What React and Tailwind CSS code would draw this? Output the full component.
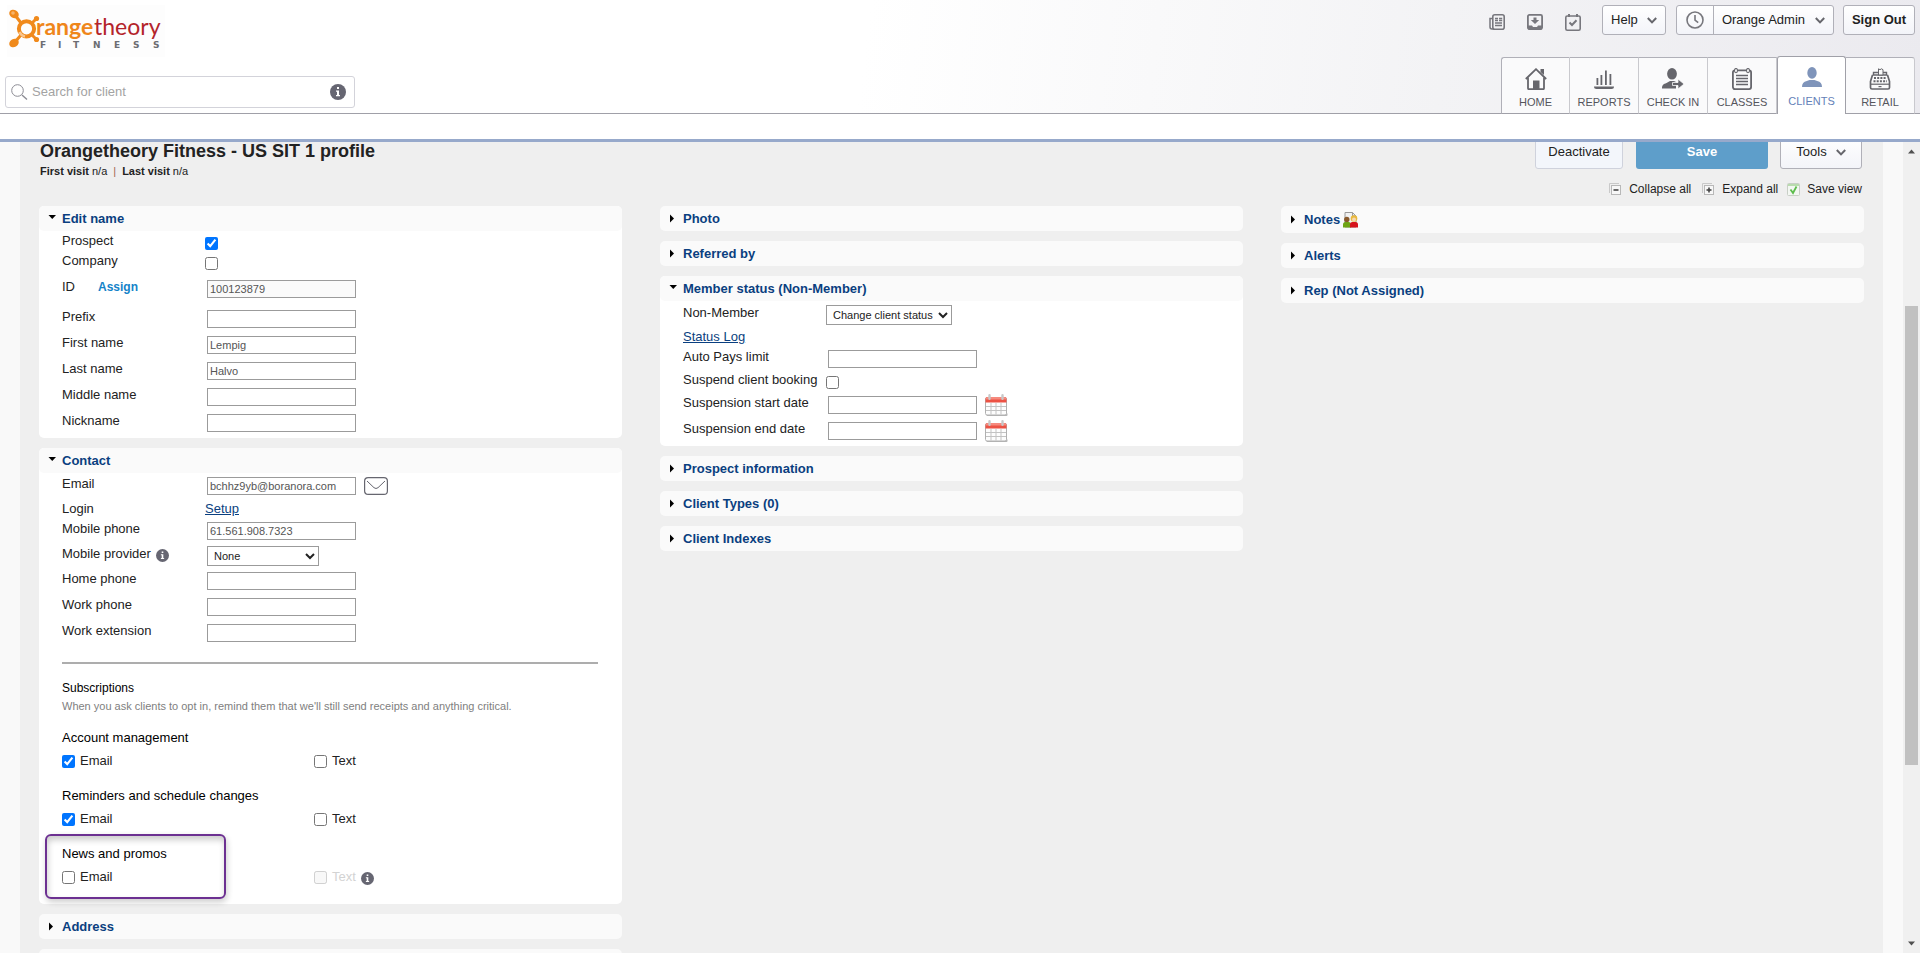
import { useState } from "react";
import clsx from "clsx";

/* ---------- Icons ---------- */

const Logo = () => (
  <svg width="158" height="52" viewBox="0 0 158 52" role="img" aria-label="Orangetheory Fitness">
    <rect width="158" height="52" fill="#fdfdfd" />
    <g stroke="#f08a1c" strokeLinecap="round">
      <path d="M8 10 L14 18 M29 14 L26 17 M8 37 L14 30 M29 34 L25 30" strokeWidth="3" />
      <circle cx="19.5" cy="23.800" r="7.600" fill="none" strokeWidth="4" />
    </g>
    <g fill="#f08a1c">
      <ellipse cx="7" cy="9" rx="5" ry="4" transform="rotate(30 7 9)" />
      <circle cx="29.500" cy="13.500" r="2.600" />
      <ellipse cx="7" cy="38" rx="5" ry="4" transform="rotate(-30 7 38)" />
      <circle cx="29.500" cy="34.500" r="2.600" />
    </g>
    <path d="M12.500 27 A7.600 7.600 0 0 0 18 31.400" stroke="#f9c58d" strokeWidth="2.500" fill="none" />
    <circle cx="6" cy="8" r="1.800" fill="#f7b46b" />
    <text x="29" y="30" fontFamily="Lato, sans-serif" fontSize="23" fontWeight="700" fill="#ef861a">range</text>
    <text x="87" y="30" fontFamily="Lato, sans-serif" fontSize="23" fill="#b4242b">theory</text>
    <text
      x="33 51 66 86 107 126 146"
      y="43"
      fontFamily="DejaVu Sans, sans-serif"
      fontSize="9"
      fontWeight="700"
      fill="#6c6d72"
    >
      FITNESS
    </text>
  </svg>
);

const InfoIcon = ({ size = 13 }) => (
  <svg width={size} height={size} viewBox="0 0 16 16" className="shrink-0">
    <circle cx="8" cy="8" r="8" fill="#666672" />
    <path d="M7 3h2v2H7z M6 6.5h3V11h1v1.2H6V11h1V7.7H6z" fill="#fff" />
  </svg>
);

const SearchIcon = () => (
  <svg width="17" height="17" viewBox="0 0 17 17" fill="none" stroke="#8c8c94" strokeWidth="1">
    <circle cx="6.5" cy="6.5" r="5.8" />
    <path d="M11 11 L16 15.5" strokeWidth="1.4" />
  </svg>
);

const Chevron = () => (
  <svg width="10" height="7" viewBox="0 0 10 7" fill="none" stroke="#66666c" strokeWidth="2">
    <path d="M0.8 1 L5 5.4 L9.2 1" />
  </svg>
);

const NewsIcon = () => (
  <svg width="16" height="16" viewBox="0 0 16 16" fill="none" stroke="#77777d">
    <rect x="3.8" y="0.8" width="11.4" height="14.4" rx="2" strokeWidth="1.6" />
    <path d="M3.5 4.5H1V13a2 2 0 0 0 2 2h2" strokeWidth="1.5" />
    <path d="M6 4.5h3 M6 6.5h3 M10 4.5h3.2 M10 6.5h3.2 M6 9h7 M6 11.5h7" strokeWidth="1.3" />
  </svg>
);

const DownloadIcon = () => (
  <svg width="16" height="16" viewBox="0 0 16 16">
    <rect x="0.9" y="0.9" width="14.2" height="14.2" rx="1.5" fill="none" stroke="#77777d" strokeWidth="1.8" />
    <path d="M1 11.500h4l1 1.500h4l1-1.500h4v4H1z" fill="#77777d" />
    <path d="M6.500 3.500h3v2.500h2.700L8 10 3.800 6h2.700z" fill="#77777d" />
  </svg>
);

const TaskIcon = () => (
  <svg width="16" height="17" viewBox="0 0 16 17" fill="none" stroke="#77777d">
    <rect x="0.8" y="2" width="14.4" height="14.2" rx="1.5" strokeWidth="1.6" />
    <path d="M4 0v3 M12 0v3" strokeWidth="2" />
    <path d="M4.5 8.5 L7 11 L11.5 6.3" strokeWidth="2" />
  </svg>
);

const ClockIcon = () => (
  <svg width="18" height="18" viewBox="0 0 18 18" fill="none" stroke="#77777d" strokeWidth="1.6">
    <circle cx="9" cy="9" r="8" />
    <path d="M9 4v5l3.2 2.6" />
  </svg>
);

const HomeIcon = () => (
  <svg width="22" height="22" viewBox="0 0 22 22" fill="none" stroke="#66666c" strokeWidth="1.8">
    <path d="M0.8 11 L11 1.2 L21.2 11" />
    <path d="M3 9.5V20.2a1 1 0 0 0 1 1h14a1 1 0 0 0 1-1V9.5" />
    <path d="M15.500 1h3.500v6l-3.500-3z" fill="#66666c" stroke="none" />
    <rect x="8" y="12.5" width="6.5" height="8.5" fill="#66666c" stroke="none" />
  </svg>
);

const ReportsIcon = () => (
  <svg width="22" height="22" viewBox="0 0 22 22" fill="#66666c">
    <path d="M3.500 10h1.800v7H3.500z M7.500 7h1.800v10H7.500z M12 2.500h1.800V17H12z M16.500 6h1.800v11h-1.800z" />
    <path d="M1 18.500h20a2.500 2.500 0 0 1-2.500 2.500h-15A2.500 2.500 0 0 1 1 18.500z" />
  </svg>
);

const CheckInIcon = () => (
  <svg width="22" height="22" viewBox="0 0 22 22" fill="#66666c">
    <ellipse cx="10" cy="5.800" rx="4.900" ry="5.800" />
    <path d="M0 20.500c0-3.500 1.500-4.500 4.500-5.500L8 13h4l2 1v6.500z" />
    <path d="M10.500 14.500H16V11l6 5-6 5v-3.500h-5.500z" stroke="#fafafa" strokeWidth="0.800" />
  </svg>
);

const ClassesIcon = () => (
  <svg width="22" height="22" viewBox="0 0 22 22" fill="none" stroke="#66666c">
    <rect x="1.900" y="2.400" width="18.200" height="18.700" rx="2" strokeWidth="1.800" />
    <ellipse cx="5" cy="2.600" rx="1.500" ry="2.100" fill="#fafafa" strokeWidth="1.100" />
    <ellipse cx="17" cy="2.600" rx="1.500" ry="2.100" fill="#fafafa" strokeWidth="1.100" />
    <path d="M5 7.500h12 M5 10.500h12 M5 13.500h12 M5 16.500h12" strokeWidth="1.600" />
  </svg>
);

const ClientsIcon = () => (
  <svg width="22" height="22" viewBox="0 0 22 22" fill="#7f94ba">
    <ellipse cx="11" cy="5.900" rx="4.700" ry="5.900" />
    <path d="M1 20c0-3.500 1.500-5 4.800-6L8.500 13h5l2.700 1c3.300 1 4.800 2.500 4.800 6z" />
  </svg>
);

const RetailIcon = () => (
  <svg width="22" height="22" viewBox="0 0 22 22" fill="none" stroke="#66666c">
    <path d="M4.500 7V4.500h13V7 M3.500 7h15" strokeWidth="1.400" />
    <path d="M3.500 7L1.500 13.500v6A1.500 1.500 0 0 0 3 21h16a1.500 1.500 0 0 0 1.500-1.500v-6L18.500 7" strokeWidth="1.700" />
    <path d="M9.500 7V0.800l1.500 0.900 1.500-0.900 1.500 0.900V7z" fill="#fafafa" strokeWidth="1" />
    <path d="M1.500 16.200h19" strokeWidth="1.200" />
    <path d="M5 10h12.500 M4.500 13.300h13.500" strokeWidth="1.900" strokeDasharray="2 1.200" />
    <path d="M9.500 18.600h3" strokeWidth="1.200" />
  </svg>
);

const MailIcon = () => (
  <svg width="24" height="18" viewBox="0 0 24 18" fill="none" stroke="#66666f">
    <rect x="0.600" y="0.600" width="22.800" height="16.800" rx="3.500" strokeWidth="1.200" />
    <path d="M3 4 L10 10.700 Q12 12.300 14 10.700 L21 4" strokeWidth="1" />
  </svg>
);

const CalendarIcon = () => (
  <svg width="23" height="23" viewBox="0 0 23 23">
    <rect x="1.500" y="19" width="21" height="3" rx="1" fill="#b5b5b5" />
    <rect x="0.500" y="3.500" width="21" height="17.500" rx="1.500" fill="#fdfdfd" stroke="#b0b0b0" />
    <path d="M0.500 8.500V5a2 2 0 0 1 2-2h17a2 2 0 0 1 2 2v3.500z" fill="#ec5244" />
    <path d="M0.500 5.500V5a2 2 0 0 1 2-2h17a2 2 0 0 1 2 2v0.500z" fill="#f68a7e" />
    <path d="M1 12.500h20 M1 16.500h20 M6 9v11.500 M11 9v11.500 M16 9v11.500" stroke="#c3c3c3" />
    <path d="M4.500 1.200v3.600 M17.500 1.200v3.600" stroke="#c8c8c8" strokeWidth="2.400" strokeLinecap="round" />
  </svg>
);

const StackIcon = ({ plus }) => (
  <svg width="13" height="13" viewBox="0 0 13 13" fill="none">
    <path d="M0.500 10v-9.500h9.500" stroke="#c9c9c9" />
    <rect x="2.500" y="2.500" width="9" height="9" fill="#f7f7f7" stroke="#b8b8b8" />
    <path d="M4.500 7h5" stroke="#444" strokeWidth="1.600" />
    {plus && <path d="M7 4.500v5" stroke="#444" strokeWidth="1.600" />}
  </svg>
);

const SaveViewIcon = () => (
  <svg width="13" height="13" viewBox="0 0 13 13" fill="none">
    <rect x="0.500" y="0.500" width="12" height="12" rx="1" fill="#f3f7f2" stroke="#c8cfc6" />
    <path d="M1 2h11" stroke="#b9dcae" strokeWidth="2" />
    <path d="M3.500 6.500 L6 10 L9.500 3.500" stroke="#5dbd4d" strokeWidth="1.800" />
  </svg>
);

const NotesIcon = () => (
  <svg width="15" height="16" viewBox="0 0 15 16">
    <path d="M2 0.500h7.500L13 4v11H2z" fill="#f2f2f2" stroke="#9a9a9a" />
    <path d="M9.500 0.500V4H13" fill="none" stroke="#9a9a9a" />
    <circle cx="3.800" cy="7.500" r="2.700" fill="#8a5a2c" />
    <path d="M0 15.500v-3a2.500 2.500 0 0 1 2.500-2.500h3A2.500 2.500 0 0 1 8 12.500v3z" fill="#6fa414" />
    <circle cx="11" cy="6.500" r="3.300" fill="#e9b93c" />
    <circle cx="11" cy="7.500" r="2" fill="#f6d7b0" />
    <path d="M7 15.500v-3A2.500 2.500 0 0 1 9.500 10h3a2.500 2.500 0 0 1 2.500 2.500v3z" fill="#d6141c" />
  </svg>
);

/* ---------- Header ---------- */

const TABS = [
  { name: "HOME", icon: HomeIcon },
  { name: "REPORTS", icon: ReportsIcon },
  { name: "CHECK IN", icon: CheckInIcon },
  { name: "CLASSES", icon: ClassesIcon },
  { name: "CLIENTS", icon: ClientsIcon },
  { name: "RETAIL", icon: RetailIcon },
];

const headerButton =
  "flex items-center h-[30px] rounded-[3px] border border-[#b0b0b8] bg-linear-to-b from-white to-[#f3f4f9]";

const Header = () => {
  const [activeTab, setActiveTab] = useState("CLIENTS");

  return (
    <header className="shrink-0 bg-white">
      <div className="flex justify-between h-[114px] border-b border-[#a0a0a8] bg-[linear-gradient(97deg,#ffffff_45%,#f3f3f5_75%,#ebeaef_100%)]">
        <div className="flex flex-col justify-between pt-[5px] pb-[5px]">
          <div className="pl-[7px]">
            <Logo />
          </div>
          <div className="pl-[5px]">
            <label className="flex items-center gap-1 w-[350px] h-8 px-[5px] pr-2 rounded-[3px] border border-[#d3d3da] bg-white">
              <SearchIcon />
              <input
                type="text"
                aria-label="Search for client"
                placeholder="Search for client"
                className="flex-1 min-w-0 outline-none placeholder-[#a3a3a3]"
              />
              <InfoIcon size={16} />
            </label>
          </div>
        </div>

        <div className="flex flex-col items-end justify-between pt-[5px] pr-[5px]">
          {/* Utility row */}
          <div className="flex items-center">
            <div className="flex items-center gap-[22px] mr-[21px] pt-1">
              <button aria-label="News"><NewsIcon /></button>
              <button aria-label="Downloads"><DownloadIcon /></button>
              <button aria-label="Tasks"><TaskIcon /></button>
            </div>
            <button className={clsx(headerButton, "justify-center gap-[9px] w-16 mr-[10px]")}>
              Help
              <Chevron />
            </button>
            <div className={clsx(headerButton, "mr-[9px]")}>
              <button aria-label="Time clock" className="flex items-center h-full px-[9px] border-r border-[#b0b0b8]">
                <ClockIcon />
              </button>
              <button className="flex items-center gap-[10px] h-full px-2">
                Orange Admin
                <Chevron />
              </button>
            </div>
            <button className={clsx(headerButton, "justify-center w-[72px] font-bold")}>Sign Out</button>
          </div>

          {/* Main tabs */}
          <nav className="flex items-end -mb-px text-[11px] leading-4">
            {TABS.map(({ name, icon: Icon }) => (
              <a
                key={name}
                href={`#${name.toLowerCase().replace(" ", "-")}`}
                onClick={() => setActiveTab(name)}
                className={clsx(
                  "flex flex-col items-center justify-between w-[69px] pt-[10px] border-t",
                  name === activeTab
                    ? "h-[58px] pb-[5px] rounded-t-[3px] border-x border-[#a0a0a8] bg-white text-[#6381b8]"
                    : "h-[57px] pb-[3px] border-b border-r border-t-[#b0b0b8] border-b-[#a0a0a8] border-r-[#c9c9ce] bg-[#fafafb] text-[#55555c] first:border-l first:border-l-[#b0b0b8] first:rounded-tl-[3px] last:rounded-tr-[3px]"
                )}
              >
                <Icon />
                {name}
              </a>
            ))}
          </nav>
        </div>
      </div>
      <div className="h-7 border-b-[3px] border-[#97a9cb]" />
    </header>
  );
};

/* ---------- Panels ---------- */

const Arrow = ({ open }) => (
  <svg width="9" height="9" viewBox="0 0 9 9" className="shrink-0">
    {open ? <path d="M0.500 1h7.500L4.250 5z" /> : <path d="M1 0.500v8L5 4.500z" />}
  </svg>
);

const Panel = ({ title, badge, defaultOpen = false, children }) => {
  const [open, setOpen] = useState(defaultOpen);

  return (
    <section className={clsx("rounded-[5px]", open && "bg-white")}>
      <h2>
        <button
          onClick={() => setOpen(!open)}
          aria-expanded={open}
          className={clsx(
            "flex items-center w-full pl-[9px] rounded-[5px] bg-[#fafafa] font-bold text-[#0a3f80] text-left",
            badge ? "h-[27px]" : "h-[25px]"
          )}
        >
          <Arrow open={open} />
          <span className="pl-[5px] pr-[3px]">{title}</span>
          {badge}
        </button>
      </h2>
      {open && children && <div className="pl-[23px] pr-6 pb-[2px]">{children}</div>}
    </section>
  );
};

// Label column plus the control next to it
const Row = ({ label, id, extra, height = "h-[26px]", children }) => (
  <div className={clsx("flex items-center", height)}>
    <div className="flex items-center w-[143px] pb-1">
      <label htmlFor={id}>{label}</label>
      {extra}
    </div>
    {children}
  </div>
);

const inputClass =
  "w-[149px] h-[18px] ml-[2px] px-[2px] border border-[#9b9b9b] bg-white text-[11px] leading-4 text-[#555] read-only:bg-[#fafafa]";

const TextRow = ({ label, id, value = "", readOnly, extra, height, children }) => (
  <Row label={label} id={id} extra={extra} height={height}>
    <input id={id} type="text" defaultValue={value} readOnly={readOnly} className={inputClass} />
    {children}
  </Row>
);

const CheckRow = ({ label, id, checked = false, height }) => (
  <Row label={label} id={id} height={height}>
    <input id={id} type="checkbox" defaultChecked={checked} className="w-[13px] h-[13px]" />
  </Row>
);

const selectClass = "h-5 pl-[2px] border border-[#9b9b9b] bg-white text-[11px] text-[#222]";

const SUBSCRIPTIONS = [
  { id: "account", title: "Account management", email: true },
  { id: "reminders", title: "Reminders and schedule changes", email: true },
  { id: "news", title: "News and promos", email: false, textDisabled: true, highlighted: true },
];

const Subscription = ({ id, title, email, textDisabled, highlighted }) => (
  <div className="relative h-[58px]">
    {highlighted && (
      <div className="absolute -left-[17px] -top-[10px] w-[181px] h-[65px] rounded-[6px] border-2 border-[#6c3091] shadow-[1px_3px_6px_rgba(0,0,0,0.2),inset_1px_4px_6px_rgba(0,0,0,0.2)] pointer-events-none" />
    )}
    <h3 className="h-[23px] leading-5 text-black">{title}</h3>
    <div className="flex items-center h-5">
      <label className="flex items-center gap-[5px] w-[252px]">
        <input type="checkbox" name={`${id}-email`} defaultChecked={email} className="w-[13px] h-[13px]" />
        Email
      </label>
      <label className={clsx("flex items-center gap-[5px]", textDisabled && "text-[#d3d3d3]")}>
        <input type="checkbox" name={`${id}-text`} disabled={textDisabled} className="w-[13px] h-[13px]" />
        Text
      </label>
      {textDisabled && (
        <span className="pl-[5px] pt-[2px]">
          <InfoIcon />
        </span>
      )}
    </div>
  </div>
);

const EditName = () => (
  <Panel title="Edit name" defaultOpen>
    <div className="pt-px">
      <CheckRow label="Prospect" id="prospect" checked height="h-[22px]" />
      <CheckRow label="Company" id="company" height="h-[18px]" />
    </div>
    <TextRow
      label="ID"
      id="client-id"
      value="100123879"
      readOnly
      height="h-[34px]"
      extra={<a href="#assign" className="ml-[23px] text-[12px] font-bold text-[#1583c9]">Assign</a>}
    />
    <TextRow label="Prefix" id="prefix" />
    <TextRow label="First name" id="first-name" value="Lempig" />
    <TextRow label="Last name" id="last-name" value="Halvo" />
    <TextRow label="Middle name" id="middle-name" />
    <TextRow label="Nickname" id="nickname" />
  </Panel>
);

const Contact = () => (
  <Panel title="Contact" defaultOpen>
    <TextRow label="Email" id="email" value="bchhz9yb@boranora.com">
      <button aria-label="Send email" className="ml-2">
        <MailIcon />
      </button>
    </TextRow>
    <div className="flex items-center h-[19px]">
      <span className="w-[143px]">Login</span>
      <a href="#setup" className="text-[#0a3f80] underline">Setup</a>
    </div>
    <TextRow label="Mobile phone" id="mobile-phone" value="61.561.908.7323" />
    <Row
      label="Mobile provider"
      id="mobile-provider"
      height="h-6"
      extra={<span className="pl-[5px] pt-[2px]"><InfoIcon /></span>}
    >
      <select id="mobile-provider" className={clsx(selectClass, "w-[112px] ml-[2px]")}>
        <option>None</option>
      </select>
    </Row>
    <TextRow label="Home phone" id="home-phone" />
    <TextRow label="Work phone" id="work-phone" />
    <TextRow label="Work extension" id="work-extension" />

    <hr className="mt-4 border-t-2 border-[#adadad]" />

    <div className="pt-[15px]">
      <h3 className="text-[12px] leading-[18px] text-black">Subscriptions</h3>
      <p className="text-[11px] leading-[18px] text-[#808080]">
        When you ask clients to opt in, remind them that we'll still send receipts and anything critical.
      </p>
    </div>
    <div className="pt-[13px]">
      {SUBSCRIPTIONS.map((subscription) => (
        <Subscription key={subscription.id} {...subscription} />
      ))}
    </div>
  </Panel>
);

const MemberStatus = () => (
  <Panel title="Member status (Non-Member)" defaultOpen>
    <Row label="Non-Member" id="member-status" height="h-[27px]">
      <select id="member-status" className={clsx(selectClass, "w-[126px]")}>
        <option>Change client status</option>
      </select>
    </Row>
    <div className="flex items-center h-[18px]">
      <a href="#status-log" className="text-[#0a3f80] underline">Status Log</a>
    </div>
    <TextRow label="Auto Pays limit" id="auto-pays" />
    <CheckRow label="Suspend client booking" id="suspend" height="h-5" />
    <TextRow label="Suspension start date" id="suspension-start">
      <button aria-label="Pick start date" className="ml-2"><CalendarIcon /></button>
    </TextRow>
    <TextRow label="Suspension end date" id="suspension-end">
      <button aria-label="Pick end date" className="ml-2"><CalendarIcon /></button>
    </TextRow>
  </Panel>
);

const Profile = () => (
  <main className="flex-1 min-w-0 bg-[#efefef] px-[19px]">
    {/* Title bar, partly scrolled under the header */}
    <div className="flex items-start justify-between h-16 -mt-[7px]">
      <div className="pt-[5px] pl-px">
        <h1 className="text-[18px] leading-[22px] font-bold">Orangetheory Fitness - US SIT 1 profile</h1>
        <p className="flex gap-[6px] text-[11px] leading-[18px]">
          <span><b>First visit</b> n/a</span>
          <span className="text-[#a5674f]">|</span>
          <span><b>Last visit</b> n/a</span>
        </p>
      </div>
      <div className="flex flex-col items-end pr-[2px]">
        <div className="flex">
          <button className="w-[88px] h-[34px] mr-[13px] rounded-[3px] border border-[#cfd2dc] bg-[#f3f6fb]">Deactivate</button>
          <button className="w-[132px] h-[34px] mr-3 rounded-[3px] bg-[#5e9eca] font-bold text-white">Save</button>
          <button className="flex items-center justify-center gap-[9px] w-[82px] h-[34px] rounded-[3px] border border-[#b0b0b8] bg-linear-to-b from-white to-[#f3f4f9]">
            Tools
            <Chevron />
          </button>
        </div>
        <div className="flex items-center pt-[11px] text-[12px] leading-[18px]">
          <button className="flex items-center gap-[7px] mr-[11px]">
            <StackIcon />
            Collapse all
          </button>
          <button className="flex items-center gap-[7px] mr-[9px]">
            <StackIcon plus />
            Expand all
          </button>
          <button className="flex items-center gap-[7px]">
            <SaveViewIcon />
            Save view
          </button>
        </div>
      </div>
    </div>

    <div className="grid grid-cols-3 items-start gap-[38px] mt-[7px]">
      <div className="flex flex-col gap-[10px]">
        <EditName />
        <Contact />
        <Panel title="Address" />
        {/* Next panel, just below the fold */}
        <div className="h-[25px] rounded-[5px] bg-[#fafafa]" />
      </div>
      <div className="flex flex-col gap-[10px]">
        <Panel title="Photo" />
        <Panel title="Referred by" />
        <MemberStatus />
        <Panel title="Prospect information" />
        <Panel title="Client Types (0)" />
        <Panel title="Client Indexes" />
      </div>
      <div className="flex flex-col gap-[10px]">
        <Panel title="Notes" badge={<NotesIcon />} />
        <Panel title="Alerts" />
        <Panel title="Rep (Not Assigned)" />
      </div>
    </div>
  </main>
);

const Scrollbar = () => (
  <div className="flex flex-col items-center w-[17px] py-[6px] bg-[#f0f0f0]" aria-hidden="true">
    <svg width="7" height="7" viewBox="0 0 7 7" fill="#505050"><path d="M0 5.500 L3.500 1.500 L7 5.500z" /></svg>
    <div className="flex-[151]" />
    <div className="flex-[459] w-[13px] bg-[#c1c1c1]" />
    <div className="flex-[175]" />
    <svg width="7" height="7" viewBox="0 0 7 7" fill="#505050"><path d="M0 1.500 L3.500 5.500 L7 1.500z" /></svg>
  </div>
);

const App = () => (
  <div className="flex flex-col h-screen overflow-hidden bg-[#f9f9f9] font-['Liberation_Sans',Arial,sans-serif] text-[13px] leading-4 text-[#222]">
    <Header />
    <div className="flex flex-1 min-h-0 overflow-hidden">
      <div className="flex flex-1 min-w-0 px-5">
        <Profile />
      </div>
      <Scrollbar />
    </div>
  </div>
);

export default App;
